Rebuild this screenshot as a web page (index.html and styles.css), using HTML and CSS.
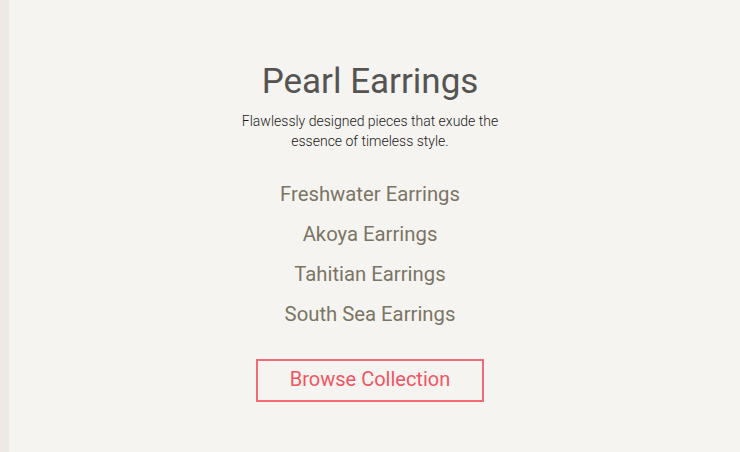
FILE: index.html
```html
<!DOCTYPE html>
<html>
<head>
<meta charset="utf-8">
<link rel="stylesheet" href="styles.css">
</head>
<body>
<main class="panel">
  <h1 class="title">Pearl Earrings</h1>
  <p class="subtitle">Flawlessly designed pieces that exude the essence of timeless style.</p>
  <ul class="links">
    <li><a href="#">Freshwater Earrings</a></li>
    <li><a href="#">Akoya Earrings</a></li>
    <li><a href="#">Tahitian Earrings</a></li>
    <li><a href="#">South Sea Earrings</a></li>
  </ul>
  <a class="btn" href="#">Browse Collection</a>
</main>
</body>
</html>
```
FILE: styles.css
```css
html, body { margin: 0; padding: 0; height: 100%; }
body {
  background: linear-gradient(to right, #efe9e6 9px, #f6f4f0 9px);
  font-family: Roboto, "Noto Sans", sans-serif;
}
.panel {
  display: flex;
  flex-direction: column;
  align-items: center;
  padding-top: 60px;
}
.title {
  margin: 0;
  font-size: 35px;
  font-weight: 400;
  color: #555452;
  line-height: 44px;
}
.subtitle {
  margin: 7px 0 0;
  width: 262px;
  text-align: center;
  font-size: 14px;
  font-weight: 300;
  line-height: 20px;
  color: #1a1a1a;
}
.links {
  list-style: none;
  margin: 30px 0 0;
  padding: 0;
  display: flex;
  flex-direction: column;
  align-items: center;
  gap: 14px;
}
.links a {
  display: block;
  font-size: 20.3px;
  line-height: 26px;
  color: #7a7565;
  text-decoration: none;
}
.btn {
  box-sizing: border-box;
  margin-top: 32px;
  width: 228px;
  height: 43px;
  padding-bottom: 3px;
  border: 2px solid #f46a74;
  display: flex;
  align-items: center;
  justify-content: center;
  font-size: 20px;
  color: #f25464;
  text-decoration: none;
}
```
